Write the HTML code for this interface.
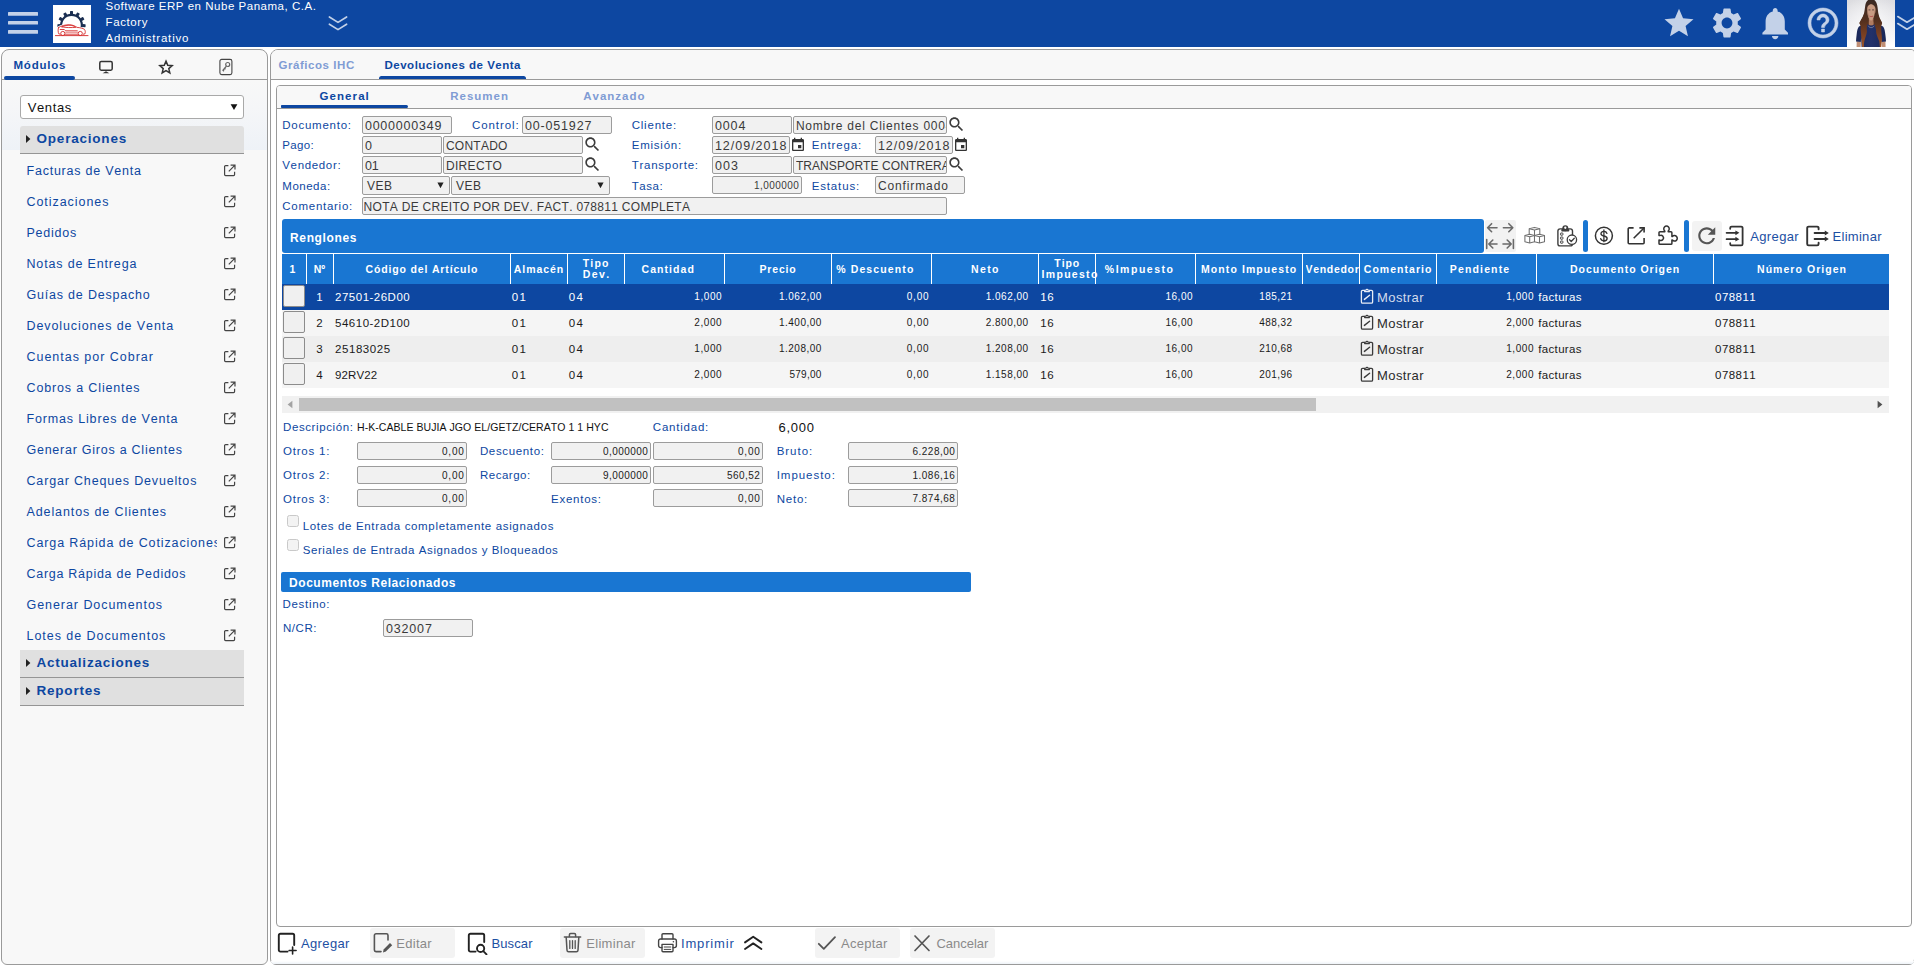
<!DOCTYPE html>
<html><head><meta charset="utf-8"><title>Devoluciones de Venta</title><style>
html,body{margin:0;padding:0;background:#fff;}
body{width:1914px;height:968px;overflow:hidden;position:relative;font-family:"Liberation Sans",sans-serif;}
#app{position:absolute;left:0;top:0;width:1914px;height:968px;overflow:hidden;}
#app div,#app svg,#app span{position:absolute;box-sizing:border-box;}
#app span{white-space:pre;font-kerning:none;}
</style></head><body><div id="app">
<div style="left:0px;top:0px;width:1914px;height:47px;background:#0d47a1;"></div>
<svg style="left:8px;top:11px;" width="30" height="24" viewBox="0 0 30 24"><g fill="#c3d1e8"><rect x="0" y="1" width="30" height="3.700" rx=".5"/><rect x="0" y="9.900" width="30" height="3.700" rx=".5"/><rect x="0" y="19" width="30" height="3.700" rx=".5"/></g></svg>
<svg style="left:53px;top:5px;" width="38" height="38" viewBox="0 0 38 38"><rect width="38" height="38" fill="#fff"/>
<path d="M7.25 22.59A11.5 11.5 0 1 1 29.75 22.59L27.60 22.13A9.3 9.3 0 1 0 9.40 22.13Z" fill="#1b2f52"/>
<g fill="#1b2f52" transform="translate(18.5,20.2)"><rect x="-1.500" y="-14.100" width="3" height="3.400" rx=".5" transform="rotate(0)"/><rect x="-1.500" y="-14.100" width="3" height="3.400" rx=".5" transform="rotate(30)"/><rect x="-1.500" y="-14.100" width="3" height="3.400" rx=".5" transform="rotate(60)"/><rect x="-1.500" y="-14.100" width="3" height="3.400" rx=".5" transform="rotate(92)"/><rect x="-1.500" y="-14.100" width="3" height="3.400" rx=".5" transform="rotate(-30)"/><rect x="-1.500" y="-14.100" width="3" height="3.400" rx=".5" transform="rotate(-60)"/><rect x="-1.500" y="-14.100" width="3" height="3.400" rx=".5" transform="rotate(-92)"/></g>
<path d="M4.600 21.800c2.800-2 7.400-3.200 12-3 3.400.2 5.800 1.400 7.800 2.800 3.200.2 6 .9 7.800 2 1 1.400 1.200 3 .6 4.800l-1.800.4h-21.600l-4.400-.4c-.8-2-.9-4.400-.4-6.600z" fill="#fff"/>
<g transform="translate(19 26) scale(.94) translate(-19 -25.400)"><g fill="none" stroke="#d42a2a" stroke-width=".95" stroke-linecap="round" stroke-linejoin="round">
<path d="M4.600 21.800c2.800-2 7.400-3.200 12-3 3.400.2 5.800 1.400 7.800 2.800 3.200.2 6 .9 7.800 2 1 1.400 1.200 3 .6 4.800l-1.800.4"/>
<path d="M4.600 21.800c-.6 2.200-.5 4.600.3 6.600l1.600.4"/>
<path d="M12 28.800h13"/>
<path d="M8.400 21c2.600-1.400 6-1.900 8.600-1.700 2.400.2 4.400 1 6 2.200-4.600.4-10.400.4-14.600-.5z"/>
<path d="M6.400 23.800h4.400l1.400 1.400h12.400"/>
<path d="M12.200 26.800h13" stroke-width=".6"/>
</g>
<circle cx="9.200" cy="28" r="2.200" fill="#fff" stroke="#d42a2a" stroke-width=".95"/>
<circle cx="27.800" cy="28" r="2.200" fill="#fff" stroke="#d42a2a" stroke-width=".95"/></g>
<path d="M2.400 30.600h32.600" stroke="#d42a2a" stroke-width="1" stroke-linecap="round" opacity=".9"/>
</svg>
<span style="font-size:11.5px;line-height:16px;top:-1.70px;color:#fff;letter-spacing:0.522px;left:105.50px;">Software ERP en Nube Panama, C.A.</span>
<span style="font-size:11.5px;line-height:16px;top:14.20px;color:#fff;letter-spacing:0.609px;left:105.50px;">Factory</span>
<span style="font-size:11.5px;line-height:16px;top:30.20px;color:#fff;letter-spacing:0.829px;left:105.50px;">Administrativo</span>
<svg style="left:327px;top:14.7px;" width="22" height="18" viewBox="0 0 22 18"><path d="M2.400 2l8.600 5.400 8.600-5.400M2.400 9.200l8.600 5.400 8.600-5.400" fill="none" stroke="#c3d1e8" stroke-width="1.700" stroke-linecap="round" stroke-linejoin="round"/></svg>
<svg style="left:1664px;top:8px;" width="30" height="29" viewBox="0 0 24 24"><path d="M12 17.270L18.180 21l-1.640-7.030L22 9.240l-7.190-.61L12 2 9.190 8.630 2 9.240l5.460 4.730L5.820 21z" fill="#c3d1e8" transform="translate(12 12) scale(1.2) translate(-12 -11.500)"/></svg>
<svg style="left:1709px;top:5px;" width="36" height="36" viewBox="0 0 24 24"><path d="M19.140 12.940c.04-.3.060-.61.060-.94 0-.32-.02-.64-.07-.94l2.030-1.580c.18-.14.230-.41.120-.61l-1.920-3.320c-.12-.22-.37-.29-.59-.22l-2.390.96c-.5-.38-1.030-.7-1.620-.94l-.36-2.540c-.04-.24-.24-.41-.48-.41h-3.840c-.24 0-.43.170-.47.410l-.36 2.540c-.59.240-1.130.57-1.620.94l-2.390-.96c-.22-.08-.47 0-.59.220L2.740 8.870c-.12.210-.08.470.12.610l2.030 1.580c-.05.300-.09.630-.09.940s.02.640.07.940l-2.030 1.580c-.18.140-.23.410-.12.610l1.920 3.320c.12.220.37.290.59.220l2.390-.96c.5.380 1.030.7 1.620.94l.36 2.540c.05.240.24.410.48.410h3.840c.24 0 .44-.17.470-.41l.36-2.540c.59-.24 1.130-.56 1.620-.94l2.390.96c.22.080.47 0 .59-.22l1.920-3.320c.12-.22.070-.47-.12-.61l-2.010-1.580zM12 15.600c-1.980 0-3.600-1.620-3.600-3.600s1.620-3.600 3.600-3.600 3.600 1.620 3.600 3.600-1.620 3.600-3.600 3.600z" fill="#c3d1e8"/></svg>
<svg style="left:1755.8px;top:3.9px;" width="38.4" height="38.4" viewBox="0 0 24 24"><path d="M12 22c1.100 0 2-.9 2-2h-4c0 1.100.89 2 2 2zm6-6v-5c0-3.070-1.640-5.640-4.500-6.320V4c0-.83-.67-1.500-1.500-1.500s-1.500.67-1.500 1.500v.68C7.630 5.360 6 7.920 6 11v5l-2 2v1h16v-1l-2-2z" fill="#c3d1e8"/></svg>
<svg style="left:1805px;top:5px;" width="36" height="36" viewBox="0 0 24 24"><path d="M11 18h2v-2h-2v2zm1-16C6.480 2 2 6.480 2 12s4.480 10 10 10 10-4.480 10-10S17.520 2 12 2zm0 18c-4.410 0-8-3.590-8-8s3.590-8 8-8 8 3.590 8 8-3.590 8-8 8zm0-14c-2.210 0-4 1.790-4 4h2c0-1.100.9-2 2-2s2 .9 2 2c0 2-3 1.750-3 5h2c0-2.250 3-2.500 3-5 0-2.210-1.790-4-4-4z" fill="#c3d1e8" stroke="#c3d1e8" stroke-width=".35"/></svg>
<svg style="left:1847px;top:0px;" width="48" height="47" viewBox="0 0 48 47"><defs><linearGradient id="avb" x1="0" y1="0" x2="0" y2="1"><stop offset="0" stop-color="#dcdce0"/><stop offset=".5" stop-color="#ececef"/><stop offset="1" stop-color="#ffffff"/></linearGradient>
<radialGradient id="avr" cx=".5" cy=".45" r=".6"><stop offset="0" stop-color="#fff" stop-opacity=".75"/><stop offset="1" stop-color="#fff" stop-opacity="0"/></radialGradient>
<linearGradient id="avh" gradientUnits="userSpaceOnUse" x1="0" y1="0" x2="0" y2="47"><stop offset="0" stop-color="#3a2923"/><stop offset=".45" stop-color="#54301f"/><stop offset=".75" stop-color="#7c4022"/><stop offset="1" stop-color="#9c5428"/></linearGradient>
<linearGradient id="avs" x1="0" y1="0" x2="1" y2="0"><stop offset="0" stop-color="#1a2757"/><stop offset=".5" stop-color="#22316a"/><stop offset="1" stop-color="#1a2757"/></linearGradient></defs>
<rect width="48" height="47" fill="url(#avb)"/><rect width="48" height="47" fill="url(#avr)"/>
<path d="M21.100 0C19.600 1.300 18.600 3 18.300 5.200c-.5 3.400-.8 6.800-1.600 9.400-.8 2.600-2 4.400-3 6.100-.7 1.200-1.200 1.900-1.100 2.600.1 1 .9 1.600 1.400 2.700h19.800c.5-1.100 1.200-1.700 1.300-2.700.1-.7-.4-1.400-1.100-2.600-1-1.700-1.800-3.500-2.400-6.100-.6-2.600-.7-6-1.400-9.400C29.800 3 28.800 1.300 27.300 0z" fill="url(#avh)"/>
<path d="M9.600 47l.1-5.700 4.200.3-.2 5.400zM38.600 47l-.2-5.700-3.600.3.300 5.400z" fill="#c08e74"/>
<path d="M21.800 18.500h4.800v6.200c-1.400 1.500-3.400 1.500-4.800 0z" fill="#b07c62"/>
<path d="M20.800 24.200c-3.500.4-7.500 1.100-8.800 2.300-1.600 1.600-2 5-2.400 8.500-.3 2.300-.5 4.400-.6 6.400l4.800.6.400-4 .3 9h19.200l.3-9 .4 4 4.600-.6c-.1-2-.3-4.100-.6-6.400-.4-3.500-.8-6.900-2.400-8.500-1.300-1.200-5.300-1.900-8.800-2.300-1 1.700-4.400 1.700-6.400 0z" fill="url(#avs)"/>
<path d="M20 9.500c0-3 1.800-5.300 4.100-5.300s4.400 2.300 4.400 5.300c0 2.800-.7 5.800-1.900 8.200-.7 1.500-1.600 2.600-2.500 3-1-.4-1.900-1.500-2.600-3-1.100-2.400-1.500-5.400-1.500-8.200z" fill="#c89b83"/>
<path d="M20 9.500c0-1 .2-2 .5-2.800.1 4 .7 8.500 2.200 12.200-.5-.6-1.100-1.400-1.400-2.300-.9-2.200-1.300-4.600-1.300-7.100zM28.500 9.500c0-1-.2-2-.5-2.800-.1 4-.7 8.500-2.200 12.200.5-.6 1.100-1.400 1.400-2.300.9-2.200 1.300-4.600 1.300-7.100z" fill="#8e6450" opacity=".65"/>
<path d="M21.500 9.900h1.900M25.100 9.900h1.900" stroke="#4a3631" stroke-width=".8" fill="none"/>
<path d="M22.900 16.300c.9.400 1.800.4 2.700 0" stroke="#b4494b" stroke-width="1" fill="none" stroke-linecap="round"/>
<path d="M21.200 25.800c1.200 2.400 4.600 2.400 6 0" stroke="#c9c9d4" stroke-width=".45" fill="none"/>
<path d="M17 14C16 17 14.500 19 13.600 20.700C12.800 22 12.400 22.800 12.600 23.400C12.900 24.400 13.600 25 13.700 26C13.900 28 13.500 29.500 13.700 31C13.900 33 14.100 34.500 14.200 36C14.400 38.500 14.600 40 14.700 41.500L15.200 47L16.800 47C16.800 45 17 43 17.300 41.300C17.700 39.500 18.300 38 18.800 36.200C19.400 34.500 19.900 33 19.900 31C19.900 29 19.600 27.500 20 26C20.400 24 21.400 22 21.400 20.500C21.300 18 20.200 16 20 13Z" fill="url(#avh)"/>
<path d="M31 14C31.600 17 32.800 19 33.800 20.700C34.500 22 35 22.800 34.800 23.400C34.600 24.400 34.200 25 34.200 26C34.100 28 34.300 29.500 34.300 31C34.400 33 34.700 34.500 34.800 36.100C34.900 38.500 34.900 40 34.800 41.300L34.300 47L32.800 47C32.700 45 32.500 43 32.200 41.300C31.700 39.500 30.800 38 30.200 36.200C29.600 34.500 29.100 33 29.100 31C29.100 29 28.400 27.500 28 26C27.500 24 26.600 22 26.600 20.500C26.700 18 27.800 16 28 13Z" fill="url(#avh)"/>
</svg>
<svg style="left:1896px;top:15px;" width="22" height="18" viewBox="0 0 22 18"><path d="M1.800 1.600l9.200 5.600 9.200-5.600M1.800 8.600l9.200 5.600 9.200-5.600" fill="none" stroke="#c3d1e8" stroke-width="1.700" stroke-linecap="round" stroke-linejoin="round"/></svg>
<div style="left:1px;top:49px;width:267px;height:916px;background:#f8f8f8;border:1px solid #9a9a9a;border-radius:8px 8px 6px 6px;"></div>
<div style="left:2px;top:80px;width:265px;height:70px;background:linear-gradient(#f8f8f8 0%,#f5f6f8 40%,#eef2f7 100%);"></div>
<div style="left:2px;top:79px;width:265px;height:1px;background:#9a9a9a;"></div>
<div style="left:4px;top:76px;width:71px;height:4px;background:#0d47a1;border-radius:2px;"></div>
<span style="font-size:11.5px;line-height:16px;top:57.20px;color:#0d47a1;font-weight:700;letter-spacing:0.786px;left:13.50px;">Módulos</span>
<svg style="left:98px;top:59px;" width="16" height="16" viewBox="0 0 16 16"><rect x="1.800" y="2.600" width="12.400" height="8.600" rx="1.400" fill="none" stroke="#333" stroke-width="1.500"/><path d="M4.600 14.200l3.400-2 3.400 2z" fill="#333"/></svg>
<svg style="left:157px;top:58px;" width="18" height="18" viewBox="0 0 24 24"><path d="M12 4.200l2.300 5.500 5.900.5-4.500 3.900 1.400 5.800L12 16.800l-5.100 3.100 1.400-5.800-4.500-3.900 5.900-.5z" fill="none" stroke="#333" stroke-width="2" stroke-linejoin="miter"/></svg>
<svg style="left:219px;top:58px;" width="14" height="18" viewBox="0 0 14 18"><rect x=".9" y="1.400" width="12" height="15.200" rx="1.800" fill="none" stroke="#444" stroke-width="1.100"/><circle cx="8.700" cy="6.500" r="2" fill="none" stroke="#666" stroke-width="1.200"/><path d="M7.400 8.100l-3.400 4.200 1 .9M5.600 10.400l.9.800" fill="none" stroke="#666" stroke-width="1.300"/></svg>
<div style="left:20px;top:95px;width:224px;height:24px;background:#fff;border:1px solid #a9a9a9;border-radius:3px;"></div>
<span style="font-size:13px;line-height:16px;top:99.60px;color:#111;letter-spacing:0.623px;left:27.70px;">Ventas</span>
<svg style="left:230px;top:103px;" width="8" height="8" viewBox="0 0 8 8"><path d="M.6 1.200h6.800L4 7z" fill="#111"/></svg>
<div style="left:20px;top:126px;width:224px;height:28px;background:#e0e0e0;border-bottom:1px solid #959595;border-radius:3px 3px 0 0;"></div>
<svg style="left:26px;top:134.8px;" width="5" height="8" viewBox="0 0 5 8"><path d="M0 0l4.400 4L0 8z" fill="#222"/></svg>
<span style="font-size:13.5px;line-height:16px;top:130.80px;color:#0d47a1;font-weight:700;letter-spacing:0.790px;left:36.50px;">Operaciones</span>
<div style="left:20px;top:650px;width:224px;height:28px;background:#e0e0e0;border-bottom:1px solid #959595;border-radius:0;"></div>
<svg style="left:26px;top:658.8px;" width="5" height="8" viewBox="0 0 5 8"><path d="M0 0l4.400 4L0 8z" fill="#222"/></svg>
<span style="font-size:13.5px;line-height:16px;top:654.80px;color:#0d47a1;font-weight:700;letter-spacing:0.768px;left:36.50px;">Actualizaciones</span>
<div style="left:20px;top:678px;width:224px;height:28px;background:#e0e0e0;border-bottom:1px solid #959595;border-radius:0;"></div>
<svg style="left:26px;top:687px;" width="5" height="8" viewBox="0 0 5 8"><path d="M0 0l4.400 4L0 8z" fill="#222"/></svg>
<span style="font-size:13.5px;line-height:16px;top:683.00px;color:#0d47a1;font-weight:700;letter-spacing:0.783px;left:36.50px;">Reportes</span>
<span style="font-size:12.5px;line-height:16px;top:162.60px;color:#0d47a1;letter-spacing:0.771px;left:26.50px;">Facturas de Venta</span>
<svg style="left:223.4px;top:163.6px;" width="13.2" height="13.2" viewBox="0 0 13.200 13.200"><path d="M5.400 1.600H2.600a1 1 0 0 0-1 1v8a1 1 0 0 0 1 1h8a1 1 0 0 0 1-1V7.800" fill="none" stroke="#444" stroke-width="1.200"/><path d="M7.600 1.200h4.400v4.400M12 1.200L5.800 7.400" fill="none" stroke="#444" stroke-width="1.200"/></svg>
<span style="font-size:12.5px;line-height:16px;top:193.60px;color:#0d47a1;letter-spacing:0.947px;left:26.50px;">Cotizaciones</span>
<svg style="left:223.4px;top:194.6px;" width="13.2" height="13.2" viewBox="0 0 13.200 13.200"><path d="M5.400 1.600H2.600a1 1 0 0 0-1 1v8a1 1 0 0 0 1 1h8a1 1 0 0 0 1-1V7.800" fill="none" stroke="#444" stroke-width="1.200"/><path d="M7.600 1.200h4.400v4.400M12 1.200L5.800 7.400" fill="none" stroke="#444" stroke-width="1.200"/></svg>
<span style="font-size:12.5px;line-height:16px;top:224.60px;color:#0d47a1;letter-spacing:0.752px;left:26.50px;">Pedidos</span>
<svg style="left:223.4px;top:225.6px;" width="13.2" height="13.2" viewBox="0 0 13.200 13.200"><path d="M5.400 1.600H2.600a1 1 0 0 0-1 1v8a1 1 0 0 0 1 1h8a1 1 0 0 0 1-1V7.800" fill="none" stroke="#444" stroke-width="1.200"/><path d="M7.600 1.200h4.400v4.400M12 1.200L5.800 7.400" fill="none" stroke="#444" stroke-width="1.200"/></svg>
<span style="font-size:12.5px;line-height:16px;top:255.60px;color:#0d47a1;letter-spacing:0.840px;left:26.50px;">Notas de Entrega</span>
<svg style="left:223.4px;top:256.6px;" width="13.2" height="13.2" viewBox="0 0 13.200 13.200"><path d="M5.400 1.600H2.600a1 1 0 0 0-1 1v8a1 1 0 0 0 1 1h8a1 1 0 0 0 1-1V7.800" fill="none" stroke="#444" stroke-width="1.200"/><path d="M7.600 1.200h4.400v4.400M12 1.200L5.800 7.400" fill="none" stroke="#444" stroke-width="1.200"/></svg>
<span style="font-size:12.5px;line-height:16px;top:286.60px;color:#0d47a1;letter-spacing:0.800px;left:26.50px;">Guías de Despacho</span>
<svg style="left:223.4px;top:287.6px;" width="13.2" height="13.2" viewBox="0 0 13.200 13.200"><path d="M5.400 1.600H2.600a1 1 0 0 0-1 1v8a1 1 0 0 0 1 1h8a1 1 0 0 0 1-1V7.800" fill="none" stroke="#444" stroke-width="1.200"/><path d="M7.600 1.200h4.400v4.400M12 1.200L5.800 7.400" fill="none" stroke="#444" stroke-width="1.200"/></svg>
<span style="font-size:12.5px;line-height:16px;top:317.60px;color:#0d47a1;letter-spacing:0.902px;left:26.50px;">Devoluciones de Venta</span>
<svg style="left:223.4px;top:318.6px;" width="13.2" height="13.2" viewBox="0 0 13.200 13.200"><path d="M5.400 1.600H2.600a1 1 0 0 0-1 1v8a1 1 0 0 0 1 1h8a1 1 0 0 0 1-1V7.800" fill="none" stroke="#444" stroke-width="1.200"/><path d="M7.600 1.200h4.400v4.400M12 1.200L5.800 7.400" fill="none" stroke="#444" stroke-width="1.200"/></svg>
<span style="font-size:12.5px;line-height:16px;top:348.60px;color:#0d47a1;letter-spacing:0.978px;left:26.50px;">Cuentas por Cobrar</span>
<svg style="left:223.4px;top:349.6px;" width="13.2" height="13.2" viewBox="0 0 13.200 13.200"><path d="M5.400 1.600H2.600a1 1 0 0 0-1 1v8a1 1 0 0 0 1 1h8a1 1 0 0 0 1-1V7.800" fill="none" stroke="#444" stroke-width="1.200"/><path d="M7.600 1.200h4.400v4.400M12 1.200L5.800 7.400" fill="none" stroke="#444" stroke-width="1.200"/></svg>
<span style="font-size:12.5px;line-height:16px;top:379.60px;color:#0d47a1;letter-spacing:0.853px;left:26.50px;">Cobros a Clientes</span>
<svg style="left:223.4px;top:380.6px;" width="13.2" height="13.2" viewBox="0 0 13.200 13.200"><path d="M5.400 1.600H2.600a1 1 0 0 0-1 1v8a1 1 0 0 0 1 1h8a1 1 0 0 0 1-1V7.800" fill="none" stroke="#444" stroke-width="1.200"/><path d="M7.600 1.200h4.400v4.400M12 1.200L5.800 7.400" fill="none" stroke="#444" stroke-width="1.200"/></svg>
<span style="font-size:12.5px;line-height:16px;top:410.60px;color:#0d47a1;letter-spacing:0.838px;left:26.50px;">Formas Libres de Venta</span>
<svg style="left:223.4px;top:411.6px;" width="13.2" height="13.2" viewBox="0 0 13.200 13.200"><path d="M5.400 1.600H2.600a1 1 0 0 0-1 1v8a1 1 0 0 0 1 1h8a1 1 0 0 0 1-1V7.800" fill="none" stroke="#444" stroke-width="1.200"/><path d="M7.600 1.200h4.400v4.400M12 1.200L5.800 7.400" fill="none" stroke="#444" stroke-width="1.200"/></svg>
<span style="font-size:12.5px;line-height:16px;top:441.60px;color:#0d47a1;letter-spacing:0.749px;left:26.50px;">Generar Giros a Clientes</span>
<svg style="left:223.4px;top:442.6px;" width="13.2" height="13.2" viewBox="0 0 13.200 13.200"><path d="M5.400 1.600H2.600a1 1 0 0 0-1 1v8a1 1 0 0 0 1 1h8a1 1 0 0 0 1-1V7.800" fill="none" stroke="#444" stroke-width="1.200"/><path d="M7.600 1.200h4.400v4.400M12 1.200L5.800 7.400" fill="none" stroke="#444" stroke-width="1.200"/></svg>
<span style="font-size:12.5px;line-height:16px;top:472.60px;color:#0d47a1;letter-spacing:0.831px;left:26.50px;">Cargar Cheques Devueltos</span>
<svg style="left:223.4px;top:473.6px;" width="13.2" height="13.2" viewBox="0 0 13.200 13.200"><path d="M5.400 1.600H2.600a1 1 0 0 0-1 1v8a1 1 0 0 0 1 1h8a1 1 0 0 0 1-1V7.800" fill="none" stroke="#444" stroke-width="1.200"/><path d="M7.600 1.200h4.400v4.400M12 1.200L5.800 7.400" fill="none" stroke="#444" stroke-width="1.200"/></svg>
<span style="font-size:12.5px;line-height:16px;top:503.60px;color:#0d47a1;letter-spacing:0.895px;left:26.50px;">Adelantos de Clientes</span>
<svg style="left:223.4px;top:504.6px;" width="13.2" height="13.2" viewBox="0 0 13.200 13.200"><path d="M5.400 1.600H2.600a1 1 0 0 0-1 1v8a1 1 0 0 0 1 1h8a1 1 0 0 0 1-1V7.800" fill="none" stroke="#444" stroke-width="1.200"/><path d="M7.600 1.200h4.400v4.400M12 1.200L5.800 7.400" fill="none" stroke="#444" stroke-width="1.200"/></svg>
<span style="font-size:12.5px;line-height:16px;top:534.60px;color:#0d47a1;letter-spacing:0.887px;left:26.50px;width:190px;overflow:hidden;">Carga Rápida de Cotizaciones</span>
<svg style="left:223.4px;top:535.6px;" width="13.2" height="13.2" viewBox="0 0 13.200 13.200"><path d="M5.400 1.600H2.600a1 1 0 0 0-1 1v8a1 1 0 0 0 1 1h8a1 1 0 0 0 1-1V7.800" fill="none" stroke="#444" stroke-width="1.200"/><path d="M7.600 1.200h4.400v4.400M12 1.200L5.800 7.400" fill="none" stroke="#444" stroke-width="1.200"/></svg>
<span style="font-size:12.5px;line-height:16px;top:565.60px;color:#0d47a1;letter-spacing:0.720px;left:26.50px;">Carga Rápida de Pedidos</span>
<svg style="left:223.4px;top:566.6px;" width="13.2" height="13.2" viewBox="0 0 13.200 13.200"><path d="M5.400 1.600H2.600a1 1 0 0 0-1 1v8a1 1 0 0 0 1 1h8a1 1 0 0 0 1-1V7.800" fill="none" stroke="#444" stroke-width="1.200"/><path d="M7.600 1.200h4.400v4.400M12 1.200L5.800 7.400" fill="none" stroke="#444" stroke-width="1.200"/></svg>
<span style="font-size:12.5px;line-height:16px;top:596.60px;color:#0d47a1;letter-spacing:0.946px;left:26.50px;">Generar Documentos</span>
<svg style="left:223.4px;top:597.6px;" width="13.2" height="13.2" viewBox="0 0 13.200 13.200"><path d="M5.400 1.600H2.600a1 1 0 0 0-1 1v8a1 1 0 0 0 1 1h8a1 1 0 0 0 1-1V7.800" fill="none" stroke="#444" stroke-width="1.200"/><path d="M7.600 1.200h4.400v4.400M12 1.200L5.800 7.400" fill="none" stroke="#444" stroke-width="1.200"/></svg>
<span style="font-size:12.5px;line-height:16px;top:627.60px;color:#0d47a1;letter-spacing:0.955px;left:26.50px;">Lotes de Documentos</span>
<svg style="left:223.4px;top:628.6px;" width="13.2" height="13.2" viewBox="0 0 13.200 13.200"><path d="M5.400 1.600H2.600a1 1 0 0 0-1 1v8a1 1 0 0 0 1 1h8a1 1 0 0 0 1-1V7.800" fill="none" stroke="#444" stroke-width="1.200"/><path d="M7.600 1.200h4.400v4.400M12 1.200L5.800 7.400" fill="none" stroke="#444" stroke-width="1.200"/></svg>
<div style="left:270px;top:49px;width:1645px;height:916px;background:#fff;border:1px solid #9a9a9a;border-radius:8px 4px 6px 6px;"></div>
<div style="left:271px;top:50px;width:1643px;height:29px;background:#f8f8f8;border-radius:7px 3px 0 0;"></div>
<div style="left:271px;top:79px;width:1643px;height:1px;background:#9a9a9a;"></div>
<div style="left:271px;top:961px;width:1643px;height:3px;background:linear-gradient(#fff,#eef3f8);border-radius:0 0 5px 5px;"></div>
<span style="font-size:11.5px;line-height:16px;top:57.00px;color:#809cd4;font-weight:700;letter-spacing:0.548px;left:278.50px;">Gráficos IHC</span>
<span style="font-size:11.5px;line-height:16px;top:57.00px;color:#0d47a1;font-weight:700;letter-spacing:0.505px;left:384.50px;">Devoluciones de Venta</span>
<div style="left:379px;top:76px;width:147px;height:3.2px;background:#0d47a1;border-radius:2.500px 2.500px 0 0;"></div>
<div style="left:276px;top:85px;width:1636px;height:842px;background:#fff;border:1px solid #9a9a9a;border-radius:4px;"></div>
<div style="left:277px;top:86px;width:1634px;height:22px;background:#f8f8f8;border-radius:3px 3px 0 0;"></div>
<div style="left:277px;top:108px;width:1634px;height:1px;background:#9a9a9a;"></div>
<div style="left:281px;top:104.6px;width:127px;height:3.5px;background:#0d47a1;border-radius:1px 2px 2px 1px;"></div>
<span style="font-size:11.5px;line-height:16px;top:88.00px;color:#0d47a1;font-weight:700;letter-spacing:1.079px;left:319.50px;">General</span>
<span style="font-size:11.5px;line-height:16px;top:88.00px;color:#809cd4;font-weight:700;letter-spacing:1.003px;left:450.20px;">Resumen</span>
<span style="font-size:11.5px;line-height:16px;top:88.00px;color:#809cd4;font-weight:700;letter-spacing:0.982px;left:583.30px;">Avanzado</span>
<span style="font-size:11.5px;line-height:16px;top:117.30px;color:#0d47a1;letter-spacing:0.743px;left:282.30px;">Documento:</span>
<div style="left:362px;top:116px;width:90px;height:18px;background:#f1f1f1;border:1px solid #9c9c9c;border-radius:2px;"></div>
<span style="font-size:12.5px;line-height:16px;top:117.50px;color:#3a3a3a;letter-spacing:0.785px;left:364.90px;width:86.1px;overflow:hidden;">0000000349</span>
<span style="font-size:11.5px;line-height:16px;top:117.30px;color:#0d47a1;letter-spacing:0.888px;left:472.10px;">Control:</span>
<div style="left:522px;top:116px;width:90px;height:18px;background:#f1f1f1;border:1px solid #9c9c9c;border-radius:2px;"></div>
<span style="font-size:12.5px;line-height:16px;top:117.50px;color:#3a3a3a;letter-spacing:0.840px;left:524.90px;width:86.1px;overflow:hidden;">00-051927</span>
<span style="font-size:11.5px;line-height:16px;top:117.30px;color:#0d47a1;letter-spacing:0.786px;left:631.70px;">Cliente:</span>
<div style="left:712px;top:116px;width:80px;height:18px;background:#f1f1f1;border:1px solid #9c9c9c;border-radius:2px;"></div>
<span style="font-size:12.5px;line-height:16px;top:117.50px;color:#3a3a3a;letter-spacing:0.896px;left:714.90px;width:76.1px;overflow:hidden;">0004</span>
<div style="left:793px;top:116px;width:154px;height:18px;background:#f1f1f1;border:1px solid #9c9c9c;border-radius:2px;"></div>
<span style="font-size:12px;line-height:16px;top:117.50px;color:#3a3a3a;letter-spacing:0.772px;left:795.90px;width:150.1px;overflow:hidden;">Nombre del Clientes 0004</span>
<svg style="left:946.65px;top:115.35000000000001px;" width="18.8" height="18.8" viewBox="0 0 24 24"><path d="M15.500 14h-.79l-.28-.27C15.410 12.590 16 11.110 16 9.500 16 5.910 13.090 3 9.500 3S3 5.910 3 9.500 5.910 16 9.500 16c1.610 0 3.090-.59 4.230-1.570l.27.280v.790l5 4.990L20.490 19l-4.990-5zm-6 0C7.010 14 5 11.990 5 9.500S7.010 5 9.500 5 14 7.010 14 9.500 11.990 14 9.500 14z" fill="#3c3c3c"/></svg>
<span style="font-size:11.5px;line-height:16px;top:137.30px;color:#0d47a1;letter-spacing:0.359px;left:282.30px;">Pago:</span>
<div style="left:362px;top:136px;width:80px;height:18px;background:#f1f1f1;border:1px solid #9c9c9c;border-radius:2px;"></div>
<span style="font-size:12.5px;line-height:16px;top:137.50px;color:#3a3a3a;left:364.90px;width:76.1px;overflow:hidden;">0</span>
<div style="left:443px;top:136px;width:140px;height:18px;background:#f1f1f1;border:1px solid #9c9c9c;border-radius:2px;"></div>
<span style="font-size:12px;line-height:16px;top:137.50px;color:#3a3a3a;letter-spacing:0.250px;left:445.90px;width:136.1px;overflow:hidden;">CONTADO</span>
<svg style="left:582.65px;top:135.35px;" width="18.8" height="18.8" viewBox="0 0 24 24"><path d="M15.500 14h-.79l-.28-.27C15.410 12.590 16 11.110 16 9.500 16 5.910 13.090 3 9.500 3S3 5.910 3 9.500 5.910 16 9.500 16c1.610 0 3.090-.59 4.230-1.570l.27.280v.790l5 4.990L20.490 19l-4.990-5zm-6 0C7.010 14 5 11.990 5 9.500S7.010 5 9.500 5 14 7.010 14 9.500 11.990 14 9.500 14z" fill="#3c3c3c"/></svg>
<span style="font-size:11.5px;line-height:16px;top:137.30px;color:#0d47a1;letter-spacing:0.770px;left:631.70px;">Emisión:</span>
<div style="left:712px;top:136px;width:78px;height:18px;background:#f1f1f1;border:1px solid #9c9c9c;border-radius:2px;"></div>
<span style="font-size:12.5px;line-height:16px;top:137.50px;color:#3a3a3a;letter-spacing:0.993px;left:714.90px;">12/09/2018</span>
<svg style="left:790px;top:137.42px;" width="16" height="16" viewBox="0 0 24 24"><path d="M17 12h-5v5h5v-5zM16 1v2H8V1H6v2H5c-1.110 0-1.990.9-1.990 2L3 19c0 1.100.89 2 2 2h14c1.100 0 2-.9 2-2V5c0-1.100-.9-2-2-2h-1V1h-2zm3 18H5V8h14v11z" fill="#333"/></svg>
<span style="font-size:11.5px;line-height:16px;top:137.30px;color:#0d47a1;letter-spacing:0.859px;left:811.70px;">Entrega:</span>
<div style="left:875px;top:136px;width:78px;height:18px;background:#f1f1f1;border:1px solid #9c9c9c;border-radius:2px;"></div>
<span style="font-size:12.5px;line-height:16px;top:137.50px;color:#3a3a3a;letter-spacing:0.993px;left:877.90px;">12/09/2018</span>
<svg style="left:952.7px;top:137.42px;" width="16" height="16" viewBox="0 0 24 24"><path d="M17 12h-5v5h5v-5zM16 1v2H8V1H6v2H5c-1.110 0-1.990.9-1.990 2L3 19c0 1.100.89 2 2 2h14c1.100 0 2-.9 2-2V5c0-1.100-.9-2-2-2h-1V1h-2zm3 18H5V8h14v11z" fill="#333"/></svg>
<span style="font-size:11.5px;line-height:16px;top:157.30px;color:#0d47a1;letter-spacing:0.653px;left:282.30px;">Vendedor:</span>
<div style="left:362px;top:156px;width:80px;height:18px;background:#f1f1f1;border:1px solid #9c9c9c;border-radius:2px;"></div>
<span style="font-size:12.5px;line-height:16px;top:157.50px;color:#3a3a3a;left:364.90px;width:76.1px;overflow:hidden;">01</span>
<div style="left:443px;top:156px;width:140px;height:18px;background:#f1f1f1;border:1px solid #9c9c9c;border-radius:2px;"></div>
<span style="font-size:12px;line-height:16px;top:157.50px;color:#3a3a3a;letter-spacing:0.333px;left:445.90px;width:136.1px;overflow:hidden;">DIRECTO</span>
<svg style="left:582.65px;top:155.35px;" width="18.8" height="18.8" viewBox="0 0 24 24"><path d="M15.500 14h-.79l-.28-.27C15.410 12.590 16 11.110 16 9.500 16 5.910 13.090 3 9.500 3S3 5.910 3 9.500 5.910 16 9.500 16c1.610 0 3.090-.59 4.230-1.570l.27.280v.790l5 4.990L20.490 19l-4.990-5zm-6 0C7.010 14 5 11.990 5 9.500S7.010 5 9.500 5 14 7.010 14 9.500 11.990 14 9.500 14z" fill="#3c3c3c"/></svg>
<span style="font-size:11.5px;line-height:16px;top:157.30px;color:#0d47a1;letter-spacing:0.749px;left:631.70px;">Transporte:</span>
<div style="left:712px;top:156px;width:80px;height:18px;background:#f1f1f1;border:1px solid #9c9c9c;border-radius:2px;"></div>
<span style="font-size:12.5px;line-height:16px;top:157.50px;color:#3a3a3a;letter-spacing:1.070px;left:714.90px;width:76.1px;overflow:hidden;">003</span>
<div style="left:793px;top:156px;width:154px;height:18px;background:#f1f1f1;border:1px solid #9c9c9c;border-radius:2px;"></div>
<span style="font-size:12px;line-height:16px;top:157.50px;color:#3a3a3a;letter-spacing:0.069px;left:795.90px;width:150.1px;overflow:hidden;">TRANSPORTE CONTRERAS</span>
<svg style="left:946.65px;top:155.35px;" width="18.8" height="18.8" viewBox="0 0 24 24"><path d="M15.500 14h-.79l-.28-.27C15.410 12.590 16 11.110 16 9.500 16 5.910 13.090 3 9.500 3S3 5.910 3 9.500 5.910 16 9.500 16c1.610 0 3.090-.59 4.230-1.570l.27.280v.790l5 4.990L20.490 19l-4.990-5zm-6 0C7.010 14 5 11.990 5 9.500S7.010 5 9.500 5 14 7.010 14 9.500 11.990 14 9.500 14z" fill="#3c3c3c"/></svg>
<span style="font-size:11.5px;line-height:16px;top:177.50px;color:#0d47a1;letter-spacing:0.506px;left:282.30px;">Moneda:</span>
<div style="left:362px;top:176px;width:88px;height:19px;background:#f1f1f1;border:1px solid #9c9c9c;border-radius:2px;"></div>
<span style="font-size:12px;line-height:16px;top:177.60px;color:#3a3a3a;letter-spacing:0.492px;left:367.10px;">VEB</span>
<svg style="left:436.5px;top:181.8px;" width="7" height="6.5" viewBox="0 0 7 6.500"><path d="M.4.4h6.200L3.500 6.200z" fill="#222"/></svg>
<div style="left:451px;top:176px;width:159px;height:19px;background:#f1f1f1;border:1px solid #9c9c9c;border-radius:2px;"></div>
<span style="font-size:12px;line-height:16px;top:177.60px;color:#3a3a3a;letter-spacing:0.492px;left:456.10px;">VEB</span>
<svg style="left:596.5px;top:181.8px;" width="7" height="6.5" viewBox="0 0 7 6.500"><path d="M.4.4h6.200L3.500 6.200z" fill="#222"/></svg>
<span style="font-size:11.5px;line-height:16px;top:177.50px;color:#0d47a1;letter-spacing:0.559px;left:631.70px;">Tasa:</span>
<div style="left:712px;top:176px;width:90px;height:18px;background:#f1f1f1;border:1px solid #9c9c9c;border-radius:2px;"></div>
<span style="font-size:10px;line-height:16px;top:177.50px;color:#3a3a3a;letter-spacing:0.440px;left:754.10px;">1,000000</span>
<span style="font-size:11.5px;line-height:16px;top:177.50px;color:#0d47a1;letter-spacing:0.848px;left:811.70px;">Estatus:</span>
<div style="left:875px;top:176px;width:90px;height:18px;background:#f1f1f1;border:1px solid #9c9c9c;border-radius:2px;"></div>
<span style="font-size:12px;line-height:16px;top:177.50px;color:#3a3a3a;letter-spacing:0.885px;left:877.90px;width:86.1px;overflow:hidden;">Confirmado</span>
<span style="font-size:11.5px;line-height:16px;top:198.20px;color:#0d47a1;letter-spacing:0.726px;left:282.30px;">Comentario:</span>
<div style="left:362px;top:197px;width:585px;height:18px;background:#f1f1f1;border:1px solid #9c9c9c;border-radius:2px;"></div>
<span style="font-size:12px;line-height:16px;top:198.50px;color:#3a3a3a;letter-spacing:0.293px;left:363.60px;width:582.4px;overflow:hidden;">NOTA DE CREITO POR DEV. FACT. 078811 COMPLETA</span>
<div style="left:282px;top:219px;width:1202px;height:34px;background:#1976d2;border-radius:3px;"></div>
<span style="font-size:12px;line-height:16px;top:229.50px;color:#fff;font-weight:700;letter-spacing:0.645px;left:290.00px;">Renglones</span>
<div style="left:1485px;top:220px;width:31px;height:31.5px;background:#f2f2f2;border-radius:2px;"></div>
<svg style="left:1485px;top:220px;" width="31" height="31.5" viewBox="0 0 31 31.500"><g fill="none" stroke="#6a6a6a" stroke-width="1.600" stroke-linecap="round" stroke-linejoin="round"><path d="M12 7.700H2.600M6.600 3.700l-4 4 4 4"/><path d="M18.400 7.700h9.400M23.800 3.700l4 4-4 4"/><path d="M12 24H3.800M7.800 20l-4 4 4 4M1.700 19.600v8.800"/><path d="M18 24h8.200M22.200 20l4 4-4 4M28.400 19.600v8.800"/></g></svg>
<svg style="left:1524px;top:226px;" width="22" height="18" viewBox="0 0 22 18"><g fill="#fff" stroke="#6e6e6e" stroke-width="1.050" stroke-linejoin="round"><path d="M10.5 1.4L15.8 2.7V8.899999999999999L10.5 10.2L5.2 8.899999999999999V2.7Z"/><path d="M5.2 2.7L10.5 4.0L15.8 2.7M10.5 4.0V10.2"/><path d="M5.7 8.2L10.5 9.5V15.7L5.7 17L0.9000000000000004 15.7V9.5Z"/><path d="M0.9000000000000004 9.5L5.7 10.799999999999999L10.5 9.5M5.7 10.799999999999999V17"/><path d="M15.5 8.2L20.5 9.5V15.7L15.5 17L10.5 15.7V9.5Z"/><path d="M10.5 9.5L15.5 10.799999999999999L20.5 9.5M15.5 10.799999999999999V17"/></g></svg>
<svg style="left:1556px;top:224px;" width="22" height="23.5" viewBox="0 -0.5 22 23.500"><g fill="none" stroke="#3d3d3d" stroke-width="1.400" stroke-linejoin="round" stroke-linecap="round"><rect x="1.900" y="4.400" width="14.600" height="17" rx="2.200"/></g><rect x="5.300" y="4.400" width="8" height="2.700" rx=".8" fill="#3d3d3d"/><circle cx="9.300" cy="3.700" r="3" fill="#3d3d3d"/><circle cx="9.300" cy="3.250" r="1.150" fill="#fff"/><g fill="none" stroke="#3d3d3d" stroke-width="1"><rect x="4.500" y="8.500" width="2.400" height="2.200" rx=".5"/><rect x="4.500" y="12.500" width="2.400" height="2.200" rx=".5"/><rect x="4.500" y="16.500" width="2.400" height="2.200" rx=".5"/></g><circle cx="15.900" cy="15.200" r="4.700" fill="#fff" stroke="#3d3d3d" stroke-width="1.300"/><path d="M13.500 15.300l1.700 1.700 3.100-3.300" fill="none" stroke="#3d3d3d" stroke-width="1.300" stroke-linecap="round" stroke-linejoin="round"/></svg>
<div style="left:1583px;top:220px;width:5px;height:31.5px;background:#1976d2;border-radius:2.500px;"></div>
<svg style="left:1594px;top:226px;" width="20" height="20" viewBox="0 0 20 20"><g fill="none" stroke="#333" stroke-linecap="round"><circle cx="9.900" cy="9.700" r="8.500" stroke-width="1.500"/><path d="M9.900 3.900v11.800" stroke-width="1.300"/><path d="M12.900 7.400c-.4-1.300-1.500-2-3-2-1.700 0-2.900.9-2.900 2.300 0 3.100 6.100 1.500 6.100 4.700 0 1.500-1.300 2.400-3.100 2.400-1.700 0-2.900-.8-3.300-2.200" stroke-width="1.400"/></g></svg>
<svg style="left:1626px;top:226px;" width="21" height="20" viewBox="0 0 21 20"><g fill="none" stroke="#333" stroke-width="1.600" stroke-linejoin="round" stroke-linecap="butt"><path d="M7.600 1.900H3.200a1 1 0 0 0-1 1V16.800a1 1 0 0 0 1 1H17.100a1 1 0 0 0 1-1V12"/><path d="M13.400 1.900h4.700v4.700" stroke-linejoin="miter"/><path d="M18 2L7.700 12.300"/></g></svg>
<svg style="left:1657px;top:225px;" width="22" height="21" viewBox="0 0 22 21"><path d="M2.900 6.800H7.800V6a2.750 2.750 0 1 1 3.400 0V6.800H14a.9.900 0 0 1 .9.900V11.600H15.400a2.750 2.750 0 1 1 0 3.500H14.900V18.400a.9.900 0 0 1-.9.900H2.900a.9.900 0 0 1-.9-.9V15.100H2.600a2.600 2.600 0 1 0 0-4.500H2V7.700a.9.900 0 0 1 .9-.9z" fill="none" stroke="#333" stroke-width="1.500" stroke-linejoin="round"/></svg>
<div style="left:1684px;top:220px;width:5px;height:31.5px;background:#1976d2;border-radius:2.500px;"></div>
<div style="left:1692px;top:220.5px;width:30px;height:30.5px;background:#f3f3f3;border-radius:3px;"></div>
<svg style="left:1694.25px;top:223.35px;" width="25.5" height="25.5" viewBox="0 0 24 24"><path d="M17.650 6.350C16.200 4.900 14.210 4 12 4c-4.420 0-7.990 3.580-7.990 8s3.570 8 7.990 8c3.730 0 6.840-2.550 7.730-6h-2.080c-.82 2.330-3.040 4-5.650 4-3.310 0-6-2.690-6-6s2.690-6 6-6c1.660 0 3.140.69 4.220 1.780L13 11h7V4l-2.350 2.350z" fill="#555" /></svg>
<svg style="left:1725px;top:225px;" width="20" height="22" viewBox="0 0 20 22"><g fill="none" stroke="#333" stroke-width="1.800" stroke-linejoin="round" stroke-linecap="round"><path d="M5.200 3.800V3a1.400 1.400 0 0 1 1.400-1.400h9.600A1.400 1.400 0 0 1 17.600 3v16a1.400 1.400 0 0 1-1.400 1.400H6.600A1.400 1.400 0 0 1 5.200 19v-.8"/><path d="M1.600 7.800h9.600M1.600 14.200h9.600"/></g><path d="M10.400 5.400l4 2.400-4 2.400zM10.400 11.800l4 2.400-4 2.400z" fill="#333"/></svg>
<span style="font-size:13px;line-height:16px;top:228.70px;color:#1c4fa3;letter-spacing:0.375px;left:1750.20px;">Agregar</span>
<svg style="left:1805px;top:225px;" width="26" height="22" viewBox="0 0 26 22"><g fill="none" stroke="#333" stroke-width="1.900" stroke-linejoin="round" stroke-linecap="round"><path d="M13.600 4.200V3A1.400 1.400 0 0 0 12.200 1.600H3.600A1.400 1.400 0 0 0 2.200 3v16a1.400 1.400 0 0 0 1.400 1.400h8.600a1.400 1.400 0 0 0 1.400-1.400v-1.200"/><path d="M9.600 8h11.600M9.600 14h11.600"/></g><path d="M19.800 5.400l4 2.600-4 2.600zM19.800 11.400l4 2.600-4 2.600z" fill="#333"/></svg>
<span style="font-size:13px;line-height:16px;top:228.70px;color:#1c4fa3;letter-spacing:0.290px;left:1832.50px;">Eliminar</span>
<div style="left:282px;top:254px;width:1607px;height:30px;background:#1976d2;"></div>
<div style="left:306px;top:254px;width:1px;height:30px;background:#fff;"></div>
<div style="left:333px;top:254px;width:1px;height:30px;background:#fff;"></div>
<div style="left:510px;top:254px;width:1px;height:30px;background:#fff;"></div>
<div style="left:567px;top:254px;width:1px;height:30px;background:#fff;"></div>
<div style="left:624px;top:254px;width:1px;height:30px;background:#fff;"></div>
<div style="left:724px;top:254px;width:1px;height:30px;background:#fff;"></div>
<div style="left:831px;top:254px;width:1px;height:30px;background:#fff;"></div>
<div style="left:931px;top:254px;width:1px;height:30px;background:#fff;"></div>
<div style="left:1038px;top:254px;width:1px;height:30px;background:#fff;"></div>
<div style="left:1095px;top:254px;width:1px;height:30px;background:#fff;"></div>
<div style="left:1195px;top:254px;width:1px;height:30px;background:#fff;"></div>
<div style="left:1302px;top:254px;width:1px;height:30px;background:#fff;"></div>
<div style="left:1359px;top:254px;width:1px;height:30px;background:#fff;"></div>
<div style="left:1436px;top:254px;width:1px;height:30px;background:#fff;"></div>
<div style="left:1536px;top:254px;width:1px;height:30px;background:#fff;"></div>
<div style="left:1713px;top:254px;width:1px;height:30px;background:#fff;"></div>
<span style="font-size:10.5px;line-height:12px;top:262.60px;color:#fff;font-weight:700;left:289.38px;">1</span>
<span style="font-size:10.5px;line-height:12px;top:262.60px;color:#fff;font-weight:700;left:313.79px;">Nº</span>
<span style="font-size:10.5px;line-height:12px;top:262.60px;color:#fff;font-weight:700;letter-spacing:0.843px;left:365.50px;">Código del Artículo</span>
<span style="font-size:10.5px;line-height:12px;top:262.60px;color:#fff;font-weight:700;letter-spacing:0.953px;left:513.75px;">Almacén</span>
<span style="font-size:10.5px;line-height:12px;top:257.40px;color:#fff;font-weight:700;letter-spacing:1.143px;left:582.80px;">Tipo</span>
<span style="font-size:10.5px;line-height:12px;top:268.20px;color:#fff;font-weight:700;letter-spacing:1.404px;left:582.80px;">Dev.</span>
<span style="font-size:10.5px;line-height:12px;top:262.60px;color:#fff;font-weight:700;letter-spacing:1.068px;left:641.50px;">Cantidad</span>
<span style="font-size:10.5px;line-height:12px;top:262.60px;color:#fff;font-weight:700;letter-spacing:0.818px;left:759.50px;">Precio</span>
<span style="font-size:10.5px;line-height:12px;top:262.60px;color:#fff;font-weight:700;letter-spacing:1.126px;left:836.20px;">% Descuento</span>
<span style="font-size:10.5px;line-height:12px;top:262.60px;color:#fff;font-weight:700;letter-spacing:1.385px;left:971.05px;">Neto</span>
<span style="font-size:10.5px;line-height:12px;top:257.40px;color:#fff;font-weight:700;letter-spacing:0.943px;left:1054.30px;">Tipo</span>
<span style="font-size:10.5px;line-height:12px;top:268.20px;color:#fff;font-weight:700;letter-spacing:1.290px;left:1041.60px;">Impuesto</span>
<span style="font-size:10.5px;line-height:12px;top:262.60px;color:#fff;font-weight:700;letter-spacing:1.523px;left:1104.80px;">%Impuesto</span>
<span style="font-size:10.5px;line-height:12px;top:262.60px;color:#fff;font-weight:700;letter-spacing:1.094px;left:1200.95px;">Monto Impuesto</span>
<span style="font-size:10.5px;line-height:12px;top:262.60px;color:#fff;font-weight:700;letter-spacing:0.695px;left:1305.50px;width:54px;overflow:hidden;">Vendedor</span>
<span style="font-size:10.5px;line-height:12px;top:262.60px;color:#fff;font-weight:700;letter-spacing:1.028px;left:1363.80px;">Comentario</span>
<span style="font-size:10.5px;line-height:12px;top:262.60px;color:#fff;font-weight:700;letter-spacing:1.139px;left:1449.85px;">Pendiente</span>
<span style="font-size:10.5px;line-height:12px;top:262.60px;color:#fff;font-weight:700;letter-spacing:0.986px;left:1569.95px;">Documento Origen</span>
<span style="font-size:10.5px;line-height:12px;top:262.60px;color:#fff;font-weight:700;letter-spacing:1.047px;left:1757.00px;">Número Origen</span>
<div style="left:282px;top:284px;width:1607px;height:26px;background:#0d47a1;"></div>
<div style="left:283px;top:285.3px;width:22px;height:22px;background:#f0f0f0;border:1px solid #8c8c8c;border-radius:2px;"></div>
<span style="font-size:11.5px;line-height:16px;top:289.00px;color:#fff;left:316.30px;">1</span>
<span style="font-size:11.5px;line-height:16px;top:289.00px;color:#fff;letter-spacing:0.490px;left:335.10px;">27501-26D00</span>
<span style="font-size:11.5px;line-height:16px;top:289.00px;color:#fff;letter-spacing:1.203px;left:511.80px;">01</span>
<span style="font-size:11.5px;line-height:16px;top:289.00px;color:#fff;letter-spacing:1.203px;left:568.80px;">04</span>
<span style="font-size:10px;line-height:16px;top:288.70px;color:#fff;letter-spacing:0.567px;left:694.30px;">1,000</span>
<span style="font-size:10px;line-height:16px;top:288.70px;color:#fff;letter-spacing:0.509px;left:778.90px;">1.062,00</span>
<span style="font-size:10px;line-height:16px;top:288.70px;color:#fff;letter-spacing:0.844px;left:906.70px;">0,00</span>
<span style="font-size:10px;line-height:16px;top:288.70px;color:#fff;letter-spacing:0.509px;left:985.70px;">1.062,00</span>
<span style="font-size:11.5px;line-height:16px;top:289.00px;color:#fff;letter-spacing:0.703px;left:1040.20px;">16</span>
<span style="font-size:10px;line-height:16px;top:288.70px;color:#fff;letter-spacing:0.492px;left:1165.50px;">16,00</span>
<span style="font-size:10px;line-height:16px;top:288.70px;color:#fff;letter-spacing:0.461px;left:1259.20px;">185,21</span>
<svg style="left:1360px;top:288.3px;" width="14" height="17" viewBox="0 0 14 17"><g fill="none" stroke="#e8edf6" stroke-width="1.300" stroke-linejoin="round" stroke-linecap="round"><path d="M4.400 2.400H2.600a1.200 1.200 0 0 0-1.200 1.200v10.400a1.200 1.200 0 0 0 1.200 1.200h8.800a1.200 1.200 0 0 0 1.200-1.200V3.600a1.200 1.200 0 0 0-1.200-1.200H9.600"/><path d="M4.600 3.600V2.200h1.200a1.300 1.300 0 0 1 2.400 0h1.200v1.400z" stroke-width="1.100"/><path d="M4.400 11.400l5.200-4.200" stroke-width="1.400"/></g></svg>
<span style="font-size:13px;line-height:16px;top:290.00px;color:#d4dcec;letter-spacing:0.390px;left:1377.10px;">Mostrar</span>
<span style="font-size:10px;line-height:16px;top:288.70px;color:#fff;letter-spacing:0.567px;left:1506.20px;">1,000</span>
<span style="font-size:11.5px;line-height:16px;top:289.00px;color:#fff;letter-spacing:0.325px;left:1538.30px;">facturas</span>
<span style="font-size:11.5px;line-height:16px;top:289.00px;color:#fff;letter-spacing:0.445px;left:1715.10px;">078811</span>
<div style="left:282px;top:310px;width:1607px;height:26px;background:#f5f5f5;"></div>
<div style="left:283px;top:311.3px;width:22px;height:22px;background:#f0f0f0;border:1px solid #8c8c8c;border-radius:2px;"></div>
<span style="font-size:11.5px;line-height:16px;top:315.00px;color:#1a1a1a;left:316.30px;">2</span>
<span style="font-size:11.5px;line-height:16px;top:315.00px;color:#1a1a1a;letter-spacing:0.490px;left:335.10px;">54610-2D100</span>
<span style="font-size:11.5px;line-height:16px;top:315.00px;color:#1a1a1a;letter-spacing:1.203px;left:511.80px;">01</span>
<span style="font-size:11.5px;line-height:16px;top:315.00px;color:#1a1a1a;letter-spacing:1.203px;left:568.80px;">04</span>
<span style="font-size:10px;line-height:16px;top:314.70px;color:#1a1a1a;letter-spacing:0.567px;left:694.30px;">2,000</span>
<span style="font-size:10px;line-height:16px;top:314.70px;color:#1a1a1a;letter-spacing:0.509px;left:778.90px;">1.400,00</span>
<span style="font-size:10px;line-height:16px;top:314.70px;color:#1a1a1a;letter-spacing:0.844px;left:906.70px;">0,00</span>
<span style="font-size:10px;line-height:16px;top:314.70px;color:#1a1a1a;letter-spacing:0.509px;left:985.70px;">2.800,00</span>
<span style="font-size:11.5px;line-height:16px;top:315.00px;color:#1a1a1a;letter-spacing:0.703px;left:1040.20px;">16</span>
<span style="font-size:10px;line-height:16px;top:314.70px;color:#1a1a1a;letter-spacing:0.492px;left:1165.50px;">16,00</span>
<span style="font-size:10px;line-height:16px;top:314.70px;color:#1a1a1a;letter-spacing:0.461px;left:1259.20px;">488,32</span>
<svg style="left:1360px;top:314.3px;" width="14" height="17" viewBox="0 0 14 17"><g fill="none" stroke="#3a3a3a" stroke-width="1.300" stroke-linejoin="round" stroke-linecap="round"><path d="M4.400 2.400H2.600a1.200 1.200 0 0 0-1.200 1.200v10.400a1.200 1.200 0 0 0 1.200 1.200h8.800a1.200 1.200 0 0 0 1.200-1.200V3.600a1.200 1.200 0 0 0-1.200-1.200H9.600"/><path d="M4.600 3.600V2.200h1.200a1.300 1.300 0 0 1 2.400 0h1.200v1.400z" stroke-width="1.100"/><path d="M4.400 11.400l5.200-4.200" stroke-width="1.400"/></g></svg>
<span style="font-size:13px;line-height:16px;top:316.00px;color:#2a2a2a;letter-spacing:0.390px;left:1377.10px;">Mostrar</span>
<span style="font-size:10px;line-height:16px;top:314.70px;color:#1a1a1a;letter-spacing:0.567px;left:1506.20px;">2,000</span>
<span style="font-size:11.5px;line-height:16px;top:315.00px;color:#1a1a1a;letter-spacing:0.325px;left:1538.30px;">facturas</span>
<span style="font-size:11.5px;line-height:16px;top:315.00px;color:#1a1a1a;letter-spacing:0.445px;left:1715.10px;">078811</span>
<div style="left:282px;top:336px;width:1607px;height:26px;background:#eeeeee;"></div>
<div style="left:283px;top:337.3px;width:22px;height:22px;background:#f0f0f0;border:1px solid #8c8c8c;border-radius:2px;"></div>
<span style="font-size:11.5px;line-height:16px;top:341.00px;color:#1a1a1a;left:316.30px;">3</span>
<span style="font-size:11.5px;line-height:16px;top:341.00px;color:#1a1a1a;letter-spacing:0.547px;left:335.10px;">25183025</span>
<span style="font-size:11.5px;line-height:16px;top:341.00px;color:#1a1a1a;letter-spacing:1.203px;left:511.80px;">01</span>
<span style="font-size:11.5px;line-height:16px;top:341.00px;color:#1a1a1a;letter-spacing:1.203px;left:568.80px;">04</span>
<span style="font-size:10px;line-height:16px;top:340.70px;color:#1a1a1a;letter-spacing:0.567px;left:694.30px;">1,000</span>
<span style="font-size:10px;line-height:16px;top:340.70px;color:#1a1a1a;letter-spacing:0.509px;left:778.90px;">1.208,00</span>
<span style="font-size:10px;line-height:16px;top:340.70px;color:#1a1a1a;letter-spacing:0.844px;left:906.70px;">0,00</span>
<span style="font-size:10px;line-height:16px;top:340.70px;color:#1a1a1a;letter-spacing:0.509px;left:985.70px;">1.208,00</span>
<span style="font-size:11.5px;line-height:16px;top:341.00px;color:#1a1a1a;letter-spacing:0.703px;left:1040.20px;">16</span>
<span style="font-size:10px;line-height:16px;top:340.70px;color:#1a1a1a;letter-spacing:0.492px;left:1165.50px;">16,00</span>
<span style="font-size:10px;line-height:16px;top:340.70px;color:#1a1a1a;letter-spacing:0.461px;left:1259.20px;">210,68</span>
<svg style="left:1360px;top:340.3px;" width="14" height="17" viewBox="0 0 14 17"><g fill="none" stroke="#3a3a3a" stroke-width="1.300" stroke-linejoin="round" stroke-linecap="round"><path d="M4.400 2.400H2.600a1.200 1.200 0 0 0-1.200 1.200v10.400a1.200 1.200 0 0 0 1.200 1.200h8.800a1.200 1.200 0 0 0 1.200-1.200V3.600a1.200 1.200 0 0 0-1.200-1.200H9.600"/><path d="M4.600 3.600V2.200h1.200a1.300 1.300 0 0 1 2.400 0h1.200v1.400z" stroke-width="1.100"/><path d="M4.400 11.400l5.200-4.200" stroke-width="1.400"/></g></svg>
<span style="font-size:13px;line-height:16px;top:342.00px;color:#2a2a2a;letter-spacing:0.390px;left:1377.10px;">Mostrar</span>
<span style="font-size:10px;line-height:16px;top:340.70px;color:#1a1a1a;letter-spacing:0.567px;left:1506.20px;">1,000</span>
<span style="font-size:11.5px;line-height:16px;top:341.00px;color:#1a1a1a;letter-spacing:0.325px;left:1538.30px;">facturas</span>
<span style="font-size:11.5px;line-height:16px;top:341.00px;color:#1a1a1a;letter-spacing:0.445px;left:1715.10px;">078811</span>
<div style="left:282px;top:362px;width:1607px;height:26px;background:#f5f5f5;"></div>
<div style="left:283px;top:363.3px;width:22px;height:22px;background:#f0f0f0;border:1px solid #8c8c8c;border-radius:2px;"></div>
<span style="font-size:11.5px;line-height:16px;top:367.00px;color:#1a1a1a;left:316.30px;">4</span>
<span style="font-size:11.5px;line-height:16px;top:367.00px;color:#1a1a1a;letter-spacing:0.087px;left:335.10px;">92RV22</span>
<span style="font-size:11.5px;line-height:16px;top:367.00px;color:#1a1a1a;letter-spacing:1.203px;left:511.80px;">01</span>
<span style="font-size:11.5px;line-height:16px;top:367.00px;color:#1a1a1a;letter-spacing:1.203px;left:568.80px;">04</span>
<span style="font-size:10px;line-height:16px;top:366.70px;color:#1a1a1a;letter-spacing:0.567px;left:694.30px;">2,000</span>
<span style="font-size:10px;line-height:16px;top:366.70px;color:#1a1a1a;letter-spacing:0.281px;left:789.40px;">579,00</span>
<span style="font-size:10px;line-height:16px;top:366.70px;color:#1a1a1a;letter-spacing:0.844px;left:906.70px;">0,00</span>
<span style="font-size:10px;line-height:16px;top:366.70px;color:#1a1a1a;letter-spacing:0.509px;left:985.70px;">1.158,00</span>
<span style="font-size:11.5px;line-height:16px;top:367.00px;color:#1a1a1a;letter-spacing:0.703px;left:1040.20px;">16</span>
<span style="font-size:10px;line-height:16px;top:366.70px;color:#1a1a1a;letter-spacing:0.492px;left:1165.50px;">16,00</span>
<span style="font-size:10px;line-height:16px;top:366.70px;color:#1a1a1a;letter-spacing:0.461px;left:1259.20px;">201,96</span>
<svg style="left:1360px;top:366.3px;" width="14" height="17" viewBox="0 0 14 17"><g fill="none" stroke="#3a3a3a" stroke-width="1.300" stroke-linejoin="round" stroke-linecap="round"><path d="M4.400 2.400H2.600a1.200 1.200 0 0 0-1.200 1.200v10.400a1.200 1.200 0 0 0 1.200 1.200h8.800a1.200 1.200 0 0 0 1.200-1.200V3.600a1.200 1.200 0 0 0-1.200-1.200H9.600"/><path d="M4.600 3.600V2.200h1.200a1.300 1.300 0 0 1 2.400 0h1.200v1.400z" stroke-width="1.100"/><path d="M4.400 11.400l5.200-4.200" stroke-width="1.400"/></g></svg>
<span style="font-size:13px;line-height:16px;top:368.00px;color:#2a2a2a;letter-spacing:0.390px;left:1377.10px;">Mostrar</span>
<span style="font-size:10px;line-height:16px;top:366.70px;color:#1a1a1a;letter-spacing:0.567px;left:1506.20px;">2,000</span>
<span style="font-size:11.5px;line-height:16px;top:367.00px;color:#1a1a1a;letter-spacing:0.325px;left:1538.30px;">facturas</span>
<span style="font-size:11.5px;line-height:16px;top:367.00px;color:#1a1a1a;letter-spacing:0.445px;left:1715.10px;">078811</span>
<div style="left:282px;top:396px;width:1607px;height:17px;background:#f1f1f1;"></div>
<div style="left:299px;top:398px;width:1017px;height:13px;background:#c1c1c1;"></div>
<svg style="left:286px;top:400px;" width="8" height="9" viewBox="0 0 8 9"><path d="M6.400.8v7.400L1.600 4.500z" fill="#a3a3a3"/></svg>
<svg style="left:1876px;top:400px;" width="8" height="9" viewBox="0 0 8 9"><path d="M1.600.8v7.400l4.800-3.700z" fill="#505050"/></svg>
<span style="font-size:11.5px;line-height:16px;top:419.00px;color:#0d47a1;letter-spacing:0.602px;left:283.00px;">Descripción:</span>
<span style="font-size:10.5px;line-height:16px;top:419.00px;color:#111;letter-spacing:0.058px;left:357.00px;">H-K-CABLE BUJIA JGO EL/GETZ/CERATO 1 1 HYC</span>
<span style="font-size:11.5px;line-height:16px;top:419.00px;color:#0d47a1;letter-spacing:0.783px;left:652.80px;">Cantidad:</span>
<span style="font-size:13px;line-height:16px;top:420.00px;color:#111;letter-spacing:0.738px;left:778.50px;">6,000</span>
<span style="font-size:11.5px;line-height:16px;top:443.30px;color:#0d47a1;letter-spacing:0.785px;left:283.00px;">Otros 1:</span>
<div style="left:357px;top:442px;width:110px;height:18px;background:#f1f1f1;border:1px solid #9c9c9c;border-radius:2px;"></div>
<span style="font-size:10px;line-height:16px;top:443.50px;color:#222;letter-spacing:0.844px;left:441.90px;">0,00</span>
<span style="font-size:11.5px;line-height:16px;top:467.30px;color:#0d47a1;letter-spacing:0.785px;left:283.00px;">Otros 2:</span>
<div style="left:357px;top:466px;width:110px;height:18px;background:#f1f1f1;border:1px solid #9c9c9c;border-radius:2px;"></div>
<span style="font-size:10px;line-height:16px;top:467.50px;color:#222;letter-spacing:0.844px;left:441.90px;">0,00</span>
<span style="font-size:11.5px;line-height:16px;top:490.90px;color:#0d47a1;letter-spacing:0.785px;left:283.00px;">Otros 3:</span>
<div style="left:357px;top:489px;width:110px;height:18px;background:#f1f1f1;border:1px solid #9c9c9c;border-radius:2px;"></div>
<span style="font-size:10px;line-height:16px;top:490.50px;color:#222;letter-spacing:0.844px;left:441.90px;">0,00</span>
<span style="font-size:11.5px;line-height:16px;top:443.30px;color:#0d47a1;letter-spacing:0.646px;left:479.90px;">Descuento:</span>
<div style="left:551px;top:442px;width:100px;height:18px;background:#f1f1f1;border:1px solid #9c9c9c;border-radius:2px;"></div>
<span style="font-size:10px;line-height:16px;top:443.50px;color:#222;letter-spacing:0.469px;left:602.90px;">0,000000</span>
<div style="left:653px;top:442px;width:110px;height:18px;background:#f1f1f1;border:1px solid #9c9c9c;border-radius:2px;"></div>
<span style="font-size:10px;line-height:16px;top:443.50px;color:#222;letter-spacing:0.844px;left:737.90px;">0,00</span>
<span style="font-size:11.5px;line-height:16px;top:467.30px;color:#0d47a1;letter-spacing:0.518px;left:479.90px;">Recargo:</span>
<div style="left:551px;top:466px;width:100px;height:18px;background:#f1f1f1;border:1px solid #9c9c9c;border-radius:2px;"></div>
<span style="font-size:10px;line-height:16px;top:467.50px;color:#222;letter-spacing:0.469px;left:602.90px;">9,000000</span>
<div style="left:653px;top:466px;width:110px;height:18px;background:#f1f1f1;border:1px solid #9c9c9c;border-radius:2px;"></div>
<span style="font-size:10px;line-height:16px;top:467.50px;color:#222;letter-spacing:0.481px;left:726.90px;">560,52</span>
<span style="font-size:11.5px;line-height:16px;top:490.90px;color:#0d47a1;letter-spacing:0.750px;left:551.00px;">Exentos:</span>
<div style="left:653px;top:489px;width:110px;height:18px;background:#f1f1f1;border:1px solid #9c9c9c;border-radius:2px;"></div>
<span style="font-size:10px;line-height:16px;top:490.50px;color:#222;letter-spacing:0.844px;left:737.90px;">0,00</span>
<span style="font-size:11.5px;line-height:16px;top:443.30px;color:#0d47a1;letter-spacing:0.963px;left:776.70px;">Bruto:</span>
<div style="left:848px;top:442px;width:110px;height:18px;background:#f1f1f1;border:1px solid #9c9c9c;border-radius:2px;"></div>
<span style="font-size:10px;line-height:16px;top:443.50px;color:#222;letter-spacing:0.509px;left:912.40px;">6.228,00</span>
<span style="font-size:11.5px;line-height:16px;top:467.30px;color:#0d47a1;letter-spacing:0.963px;left:776.70px;">Impuesto:</span>
<div style="left:848px;top:466px;width:110px;height:18px;background:#f1f1f1;border:1px solid #9c9c9c;border-radius:2px;"></div>
<span style="font-size:10px;line-height:16px;top:467.50px;color:#222;letter-spacing:0.509px;left:912.40px;">1.086,16</span>
<span style="font-size:11.5px;line-height:16px;top:490.90px;color:#0d47a1;letter-spacing:0.775px;left:776.70px;">Neto:</span>
<div style="left:848px;top:489px;width:110px;height:18px;background:#f1f1f1;border:1px solid #9c9c9c;border-radius:2px;"></div>
<span style="font-size:10px;line-height:16px;top:490.50px;color:#222;letter-spacing:0.509px;left:912.40px;">7.874,68</span>
<div style="left:286.8px;top:514.6px;width:12.5px;height:12px;background:#f3f3f3;border:1px solid #c9c9c9;border-radius:2.500px;"></div>
<div style="left:286.8px;top:539px;width:12.5px;height:12px;background:#f3f3f3;border:1px solid #c9c9c9;border-radius:2.500px;"></div>
<span style="font-size:11.5px;line-height:16px;top:517.50px;color:#0d47a1;letter-spacing:0.658px;left:302.70px;">Lotes de Entrada completamente asignados</span>
<span style="font-size:11.5px;line-height:16px;top:541.50px;color:#0d47a1;letter-spacing:0.595px;left:302.70px;">Seriales de Entrada Asignados y Bloqueados</span>
<div style="left:281px;top:572px;width:690px;height:20px;background:#1976d2;border-radius:2px;"></div>
<span style="font-size:12px;line-height:16px;top:574.50px;color:#fff;font-weight:700;letter-spacing:0.567px;left:289.00px;">Documentos Relacionados</span>
<span style="font-size:11.5px;line-height:16px;top:595.50px;color:#0d47a1;letter-spacing:0.688px;left:282.50px;">Destino:</span>
<span style="font-size:11.5px;line-height:16px;top:620.00px;color:#0d47a1;letter-spacing:0.547px;left:283.00px;">N/CR:</span>
<div style="left:383px;top:619px;width:90px;height:18px;background:#f1f1f1;border:1px solid #9c9c9c;border-radius:2px;"></div>
<span style="font-size:12.5px;line-height:16px;top:620.50px;color:#3a3a3a;letter-spacing:0.856px;left:385.90px;width:86.1px;overflow:hidden;">032007</span>
<svg style="left:277px;top:931.8px;" width="21" height="23.5" viewBox="0 0 21 23.500"><g fill="none" stroke="#222" stroke-width="1.900" stroke-linecap="round" stroke-linejoin="round"><path d="M10.600 19.600H3.400a1.600 1.600 0 0 1-1.600-1.600V3.400a1.600 1.600 0 0 1 1.600-1.600h12.200a1.600 1.600 0 0 1 1.600 1.600V13"/></g><path d="M15.600 15v7M12.100 18.500h7" stroke="#222" stroke-width="1.600" fill="none" stroke-linecap="round"/></svg>
<span style="font-size:13px;line-height:16px;top:936.20px;color:#1c4fa3;letter-spacing:0.358px;left:301.00px;">Agregar</span>
<div style="left:370px;top:928px;width:85px;height:30px;background:#f3f3f3;border-radius:3px;"></div>
<svg style="left:371.5px;top:931.8px;" width="21" height="22" viewBox="0 0 21 22"><g fill="none" stroke="#555" stroke-width="1.600" stroke-linecap="round" stroke-linejoin="round"><path d="M9 19.600H4a1.600 1.600 0 0 1-1.600-1.600V3.400A1.600 1.600 0 0 1 4 1.800h10.400A1.600 1.600 0 0 1 16 3.400V8"/></g><path d="M11 20.400l.6-3 6.400-6.400 2.200 2.200-6.400 6.400z" fill="#555"/></svg>
<span style="font-size:13px;line-height:16px;top:936.20px;color:#8a8a8a;letter-spacing:0.286px;left:396.30px;">Editar</span>
<svg style="left:467px;top:931.8px;" width="21" height="23.5" viewBox="0 0 21 23.500"><g fill="none" stroke="#222" stroke-width="1.900" stroke-linecap="round" stroke-linejoin="round"><path d="M8.600 19.600H3.400a1.600 1.600 0 0 1-1.600-1.600V3.400a1.600 1.600 0 0 1 1.600-1.600h12.200a1.600 1.600 0 0 1 1.600 1.600V10"/><circle cx="13.600" cy="16.400" r="3.600"/><path d="M16.300 19.100l3.200 3.200"/></g></svg>
<span style="font-size:13px;line-height:16px;top:936.20px;color:#1c4fa3;letter-spacing:0.106px;left:491.50px;">Buscar</span>
<div style="left:560px;top:928px;width:85px;height:30px;background:#f3f3f3;border-radius:3px;"></div>
<svg style="left:562.5px;top:931.8px;" width="19" height="21" viewBox="0 0 19 21"><g fill="none" stroke="#555" stroke-width="1.500" stroke-linecap="round" stroke-linejoin="round"><path d="M1.400 5h16.200"/><path d="M6.400 4.600V2.800a1.200 1.200 0 0 1 1.200-1.200h3.800a1.200 1.200 0 0 1 1.200 1.200v1.800"/><path d="M3.200 5.400l.8 12.800a1.600 1.600 0 0 0 1.600 1.500h7.800a1.600 1.600 0 0 0 1.600-1.500l.8-12.800"/><path d="M6.800 8.600v7.800M9.500 8.600v7.800M12.200 8.600v7.800" stroke-width="1.300"/></g></svg>
<span style="font-size:13px;line-height:16px;top:936.20px;color:#8a8a8a;letter-spacing:0.290px;left:586.30px;">Eliminar</span>
<svg style="left:656.5px;top:931.8px;" width="21" height="21.5" viewBox="0 0 21 21.500"><g fill="none" stroke="#444" stroke-width="1.400" stroke-linecap="round" stroke-linejoin="round"><path d="M5 7V2.800a1 1 0 0 1 1-1h9a1 1 0 0 1 1 1V7"/><path d="M5 15.600H3.600a2 2 0 0 1-2-2V9a2 2 0 0 1 2-2h13.800a2 2 0 0 1 2 2v4.600a2 2 0 0 1-2 2H16"/><path d="M5 12.400h11v6.400a1 1 0 0 1-1 1H6a1 1 0 0 1-1-1z"/><path d="M7.200 15h6.600M7.200 17.400h6.600" stroke-width="1"/></g><circle cx="16.400" cy="9.800" r=".8" fill="#444"/></svg>
<span style="font-size:13px;line-height:16px;top:936.20px;color:#1c4fa3;letter-spacing:0.837px;left:681.00px;">Imprimir</span>
<svg style="left:743px;top:934px;" width="20.5" height="17.5" viewBox="0 0 20.500 17.500"><path d="M2 8.400l8.200-5.600 8.200 5.600M2 15l8.200-5.600 8.200 5.600" fill="none" stroke="#222" stroke-width="1.900" stroke-linecap="round" stroke-linejoin="round"/></svg>
<div style="left:815px;top:928px;width:85px;height:30px;background:#f3f3f3;border-radius:3px;"></div>
<svg style="left:817px;top:934.5px;" width="20" height="16" viewBox="0 0 20 16"><path d="M1.800 8.800l5 5L18 2.200" fill="none" stroke="#555" stroke-width="1.800" stroke-linecap="round" stroke-linejoin="round"/></svg>
<span style="font-size:13px;line-height:16px;top:936.20px;color:#8a8a8a;letter-spacing:0.231px;left:841.10px;">Aceptar</span>
<div style="left:910px;top:928px;width:85px;height:30px;background:#f3f3f3;border-radius:3px;"></div>
<svg style="left:913px;top:933.5px;" width="18" height="18.5" viewBox="0 0 18 18.500"><path d="M2 2l14 14.500M16 2L2 16.500" fill="none" stroke="#555" stroke-width="1.700" stroke-linecap="round"/></svg>
<span style="font-size:13px;line-height:16px;top:936.20px;color:#8a8a8a;letter-spacing:-0.033px;left:936.50px;">Cancelar</span>
</div></body></html>
